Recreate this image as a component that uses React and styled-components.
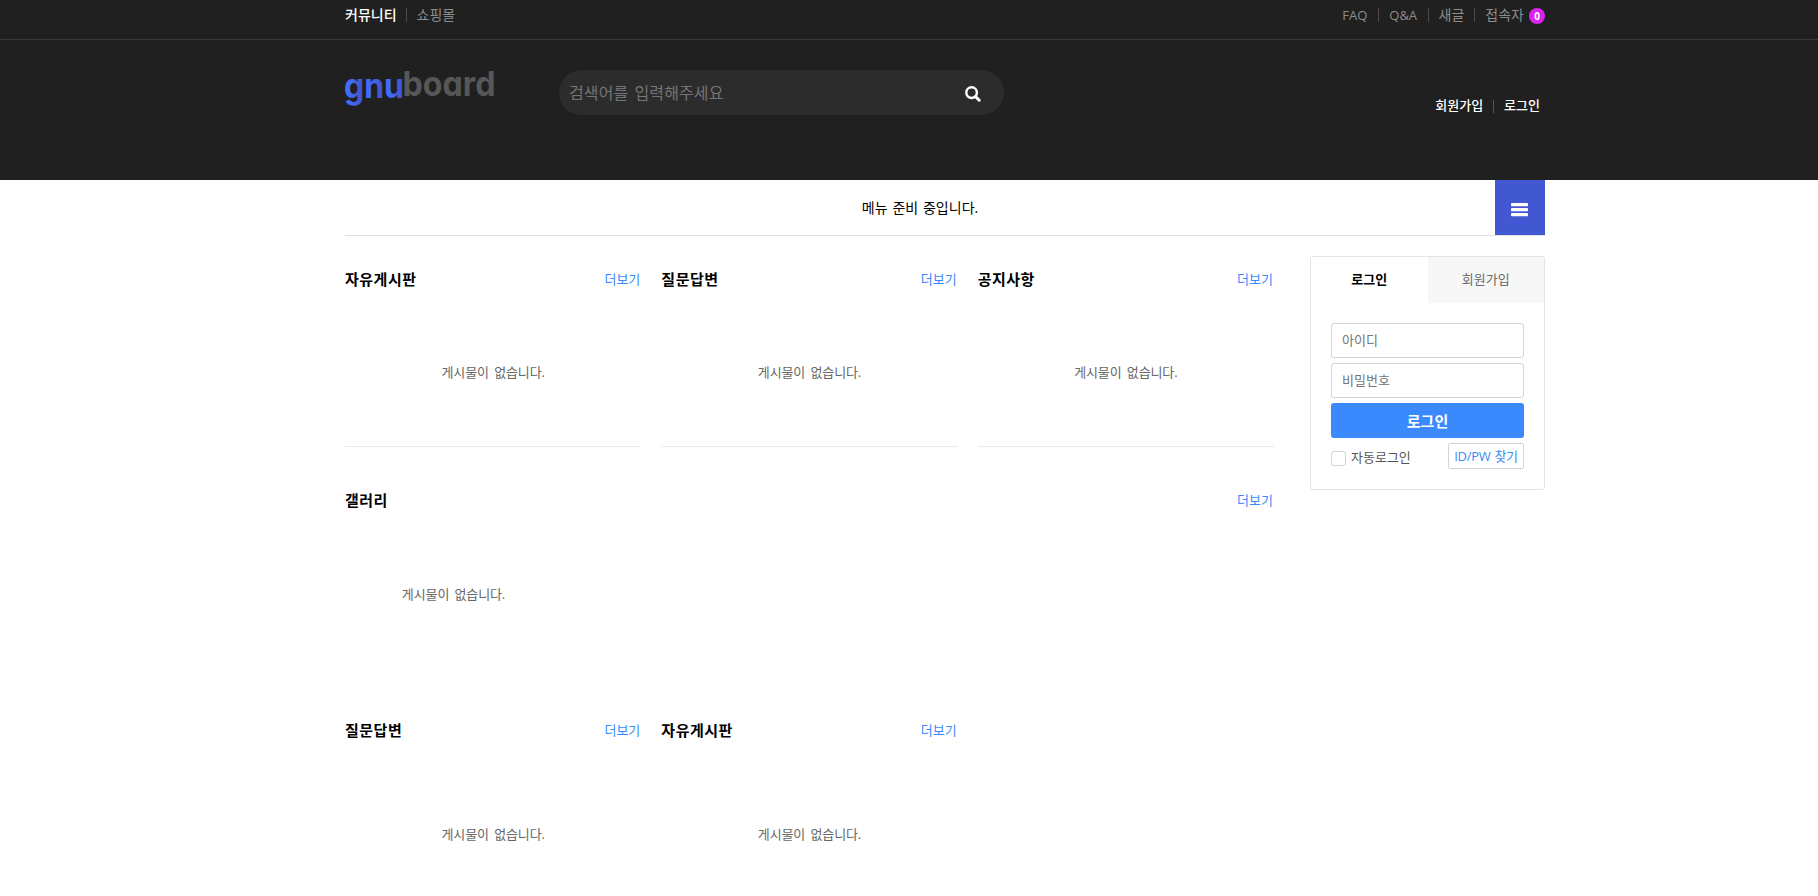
import styled, { createGlobalStyle } from "styled-components";

const topLinks = ["FAQ", "Q&A"];
const latestBoards = ["자유게시판", "질문답변", "공지사항"];
const bottomBoards = ["질문답변", "자유게시판"];

const Logo = () => (
  <LogoSvg width="160" height="58" viewBox="-4 -12 160 58">
    <defs>
      <linearGradient
        id="logoBlue"
        gradientUnits="userSpaceOnUse"
        x1="0"
        y1="0"
        x2="20"
        y2="0"
        spreadMethod="repeat"
      >
        <stop offset="0" stopColor="#3f70ff" />
        <stop offset="0.25" stopColor="#3f6cf8" />
        <stop offset="1" stopColor="#454cc2" />
      </linearGradient>
    </defs>
    <text x="-1" y="27.5" fill="url(#logoBlue)" textLength="60" lengthAdjust="spacingAndGlyphs">
      gnu
    </text>
    <text x="57.5" y="26" fill="#575757" textLength="93" lengthAdjust="spacingAndGlyphs">
      board
    </text>
  </LogoSvg>
);

const SearchIcon = () => (
  <svg width="16" height="16" viewBox="0 0 16 16" fill="none" stroke="#fff">
    <circle cx="6.6" cy="6.6" r="5.3" strokeWidth="2.5" />
    <path d="M10.6 10.6l3.6 3.6" strokeWidth="3" strokeLinecap="round" />
  </svg>
);

const MenuIcon = () => (
  <svg width="17" height="14" viewBox="0 0 17 14" fill="#fff">
    <rect x="0" y="0" width="17" height="3.3" rx="0.8" />
    <rect x="0" y="5" width="17" height="3.3" rx="0.8" />
    <rect x="0" y="10" width="17" height="3.3" rx="0.8" />
  </svg>
);

const Latest = ({ title, bordered, tall }) => (
  <LatestBox $bordered={bordered}>
    <LatestHead>
      <h2>{title}</h2>
      <a>더보기</a>
    </LatestHead>
    <Empty $tall={tall}>게시물이 없습니다.</Empty>
  </LatestBox>
);

const LoginBox = () => (
  <Login>
    <Tabs>
      <Tab $active>로그인</Tab>
      <Tab>회원가입</Tab>
    </Tabs>
    <LoginForm>
      <Field type="text" placeholder="아이디" />
      <Field type="password" placeholder="비밀번호" />
      <Submit type="button">로그인</Submit>
      <LoginOptions>
        <AutoLogin>
          <i />
          자동로그인
        </AutoLogin>
        <FindButton>ID/PW 찾기</FindButton>
      </LoginOptions>
    </LoginForm>
  </Login>
);

const App = () => (
  <>
    <GlobalStyle />
    <Header>
      <TopBar>
        <Inner>
          <TopNav>
            <TopItem $active>커뮤니티</TopItem>
            <TopItem>쇼핑몰</TopItem>
          </TopNav>
          <TopNav>
            {topLinks.map((link) => (
              <TopItem key={link} $latin>
                {link}
              </TopItem>
            ))}
            <TopItem>새글</TopItem>
            <TopItem>
              접속자
              <Badge>0</Badge>
            </TopItem>
          </TopNav>
        </Inner>
      </TopBar>
      <HeaderMain>
        <Logo />
        <SearchForm>
          <input type="text" placeholder="검색어를 입력해주세요" />
          <button type="button">
            <SearchIcon />
          </button>
        </SearchForm>
        <Account>
          <a>회원가입</a>
          <a>로그인</a>
        </Account>
      </HeaderMain>
    </Header>
    <Gnb>
      <p>메뉴 준비 중입니다.</p>
      <MenuButton type="button">
        <MenuIcon />
      </MenuButton>
    </Gnb>
    <Container>
      <Content>
        <Row>
          {latestBoards.map((title) => (
            <Latest key={title} title={title} bordered />
          ))}
        </Row>
        <Gallery>
          <LatestHead>
            <h2>갤러리</h2>
            <a>더보기</a>
          </LatestHead>
          <GalleryItem>게시물이 없습니다.</GalleryItem>
        </Gallery>
        <Row>
          {bottomBoards.map((title) => (
            <Latest key={title} title={title} tall />
          ))}
        </Row>
      </Content>
      <LoginBox />
    </Container>
  </>
);
export default App;

const GlobalStyle = createGlobalStyle`
  * {
    box-sizing: border-box;
  }
  body {
    margin: 0;
    background: #fff;
    color: #000;
    font-family: "Open Sans", "Noto Sans CJK KR", sans-serif;
    font-size: 13px;
    line-height: 20px;
  }
  h2, p {
    margin: 0;
  }
  input, button {
    margin: 0;
    padding: 0;
    border: 0;
    outline: 0;
    font-family: inherit;
  }
`;

const Header = styled.header`
  height: 180px;
  background: #212020;
`;

const TopBar = styled.div`
  height: 40px;
  border-bottom: 1px solid #393939;
`;

const Inner = styled.div`
  display: flex;
  justify-content: space-between;
  width: 1200px;
  margin-left: 345px;
`;

const TopNav = styled.div`
  display: flex;
  padding-top: 8px;
`;

const TopItem = styled.a`
  display: flex;
  align-items: center;
  height: 14px;
  padding: 0 ${({ $latin }) => ($latin ? "10.5px" : "10px")};
  border-left: 1px solid #4a4a4a;
  color: ${({ $active }) => ($active ? "#fff" : "#8c8c8c")};
  font-size: ${({ $latin }) => ($latin ? "13px" : "14px")};
  font-weight: ${({ $active }) => ($active ? 500 : 400)};
  white-space: nowrap;
  &:first-child {
    padding-left: 0;
    border-left: 0;
    padding-right: ${({ $latin }) => ($latin ? "10.5px" : "9px")};
  }
  &:last-child {
    padding-right: 0;
  }
`;

const Badge = styled.span`
  width: 16px;
  height: 16px;
  margin: 2px 0 0 5px;
  border-radius: 50%;
  background: #da22f2;
  color: #fff;
  font-size: 10px;
  font-weight: 700;
  line-height: 16px;
  text-align: center;
`;

const HeaderMain = styled.div`
  display: flex;
  align-items: flex-start;
  width: 1200px;
  margin-left: 345px;
  padding-top: 30px;
`;

const LogoSvg = styled.svg`
  margin: -12px 0 0 -4px;
  font-family: Inter, sans-serif;
  font-size: 34.5px;
  font-weight: 700;
  font-feature-settings: "cv11";
`;

const SearchForm = styled.form`
  display: flex;
  width: 445px;
  height: 45px;
  margin-left: 58px;
  border-radius: 23px;
  background: #2c2c2c;
  overflow: hidden;
  input {
    flex: 1;
    padding-left: 10px;
    background: none;
    color: #fff;
    font-size: 16px;
    word-spacing: 2px;
    letter-spacing: 0.1px;
  }
  input::placeholder {
    color: #757575;
  }
  button {
    display: flex;
    align-items: center;
    justify-content: center;
    width: 60px;
    padding: 3px 2px 0 0;
    background: none;
  }
`;

const Account = styled.div`
  display: flex;
  margin: 30px 5px 0 auto;
  a {
    height: 13px;
    padding-left: 10px;
    color: #fff;
    font-size: 13px;
    font-weight: 500;
    line-height: 11px;
  }
  a + a {
    margin-left: 10px;
    border-left: 1px solid #555;
  }
`;

const Gnb = styled.nav`
  display: flex;
  width: 1200px;
  height: 56px;
  margin-left: 345px;
  border-bottom: 1px solid #dee0e4;
  p {
    flex: 1;
    font-size: 14px;
    line-height: 55px;
    text-align: center;
    word-spacing: 1.2px;
  }
`;

const MenuButton = styled.button`
  display: flex;
  align-items: center;
  justify-content: center;
  width: 50px;
  height: 55px;
  padding: 5px 1px 0 0;
  background: #4158d1;
`;

const Container = styled.div`
  display: flex;
  justify-content: space-between;
  align-items: flex-start;
  width: 1200px;
  margin-left: 345px;
  padding-top: 20px;
`;

const Content = styled.main`
  width: 929px;
`;

const Row = styled.div`
  display: grid;
  grid-template-columns: repeat(3, 1fr);
  gap: 20px;
`;

const LatestBox = styled.section`
  margin-top: -1px;
  border-bottom: ${({ $bordered }) => ($bordered ? "1px solid #e5ecee" : "0")};
`;

const LatestHead = styled.div`
  display: flex;
  align-items: center;
  justify-content: space-between;
  height: 48px;
  h2 {
    font-size: 15px;
    font-weight: 700;
    letter-spacing: 0.5px;
  }
  a {
    padding: 0 1px 1px 0;
    color: #3a8afd;
    font-size: 13px;
  }
`;

const Empty = styled.p`
  height: ${({ $tall }) => ($tall ? "162px" : "143px")};
  padding-top: ${({ $tall }) => ($tall ? "70px" : "59px")};
  color: #666;
  text-align: center;
  letter-spacing: -0.12px;
  word-spacing: 2px;
`;

const Gallery = styled.section`
  height: 231px;
  margin-top: 29px;
`;

const GalleryItem = styled.p`
  width: 217px;
  padding-top: 60px;
  color: #666;
  text-align: center;
  letter-spacing: -0.12px;
  word-spacing: 2px;
`;

const Login = styled.aside`
  width: 235px;
  height: 234px;
  border: 1px solid #dce7eb;
  border-radius: 3px;
`;

const Tabs = styled.div`
  display: flex;
  height: 46px;
`;

const Tab = styled.div`
  flex: 1;
  background: ${({ $active }) => ($active ? "#fff" : "#f7f7f7")};
  color: ${({ $active }) => ($active ? "#000" : "#6b6b6b")};
  font-weight: ${({ $active }) => ($active ? 700 : 400)};
  line-height: 45px;
  text-align: center;
`;

const LoginForm = styled.form`
  display: flex;
  flex-direction: column;
  gap: 5px;
  padding: 20px;
`;

const Field = styled.input`
  height: 35px;
  padding: 0 10px 1px;
  border: 1px solid #d0d3db;
  border-radius: 3px;
  font-size: 13px;
  &::placeholder {
    color: #757575;
  }
`;

const Submit = styled.button`
  height: 35px;
  padding-bottom: 1px;
  border-radius: 3px;
  background: #3a8afd;
  color: #fff;
  font-size: 15px;
  font-weight: 700;
`;

const LoginOptions = styled.div`
  display: flex;
  justify-content: space-between;
`;

const AutoLogin = styled.label`
  display: flex;
  align-items: center;
  height: 28px;
  color: #555;
  i {
    width: 15px;
    height: 15px;
    margin: 3px 5px 0 0;
    border: 1px solid #d0d3db;
    border-radius: 3px;
  }
`;

const FindButton = styled.a`
  width: 76px;
  height: 26px;
  border: 1px solid #d0d3db;
  border-radius: 2px;
  color: #3a8afd;
  font-size: 13px;
  letter-spacing: -0.3px;
  line-height: 25px;
  text-align: center;
  white-space: nowrap;
  word-spacing: 1px;
`;
